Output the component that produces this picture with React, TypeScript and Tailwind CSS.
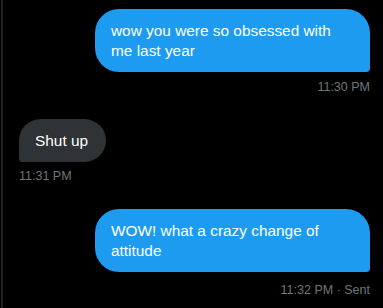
import React from 'react';

const Sent: React.FC<{ text: string; time: string; gap: string }> = ({ text, time, gap }) => {
    return (
        <div className='flex flex-col items-end'>
            <div className='w-[275px] bg-[#1d9bf0] text-white rounded-3xl rounded-br-[4px] pl-4 pr-4 pt-3 pb-[11px] text-[15.4px] leading-5'>
                {text}
            </div>
            <div className={`${gap} text-[12.5px] leading-4 text-[#71767b]`}>{time}</div>
        </div>
    );
};

export default function App() {
    return (
        <div className='w-full h-[308px] bg-black overflow-hidden' style={{ fontFamily: '"Liberation Sans", Arial, sans-serif' }}>
            <div className='ml-[1px] h-full border-l-2 border-[#202326] pl-4 pr-[13px] pt-[9px] flex flex-col'>
                <Sent text='wow you were so obsessed with me last year' time='11:30 PM' gap='mt-[7px]' />

                <div className='flex flex-col items-start mt-6'>
                    <div className='bg-[#2f3336] text-white rounded-3xl rounded-bl-[4px] pl-4 pr-[18px] pt-3 pb-[11px] text-[15.4px] leading-5'>
                        Shut up
                    </div>
                    <div className='mt-[6px] text-[12.5px] leading-4 text-[#71767b]'>11:31 PM</div>
                </div>

                <div className='mt-[25px]'>
                    <Sent text='WOW! what a crazy change of attitude' time='11:32 PM · Sent' gap='mt-[10px]' />
                </div>
            </div>
        </div>
    );
}
